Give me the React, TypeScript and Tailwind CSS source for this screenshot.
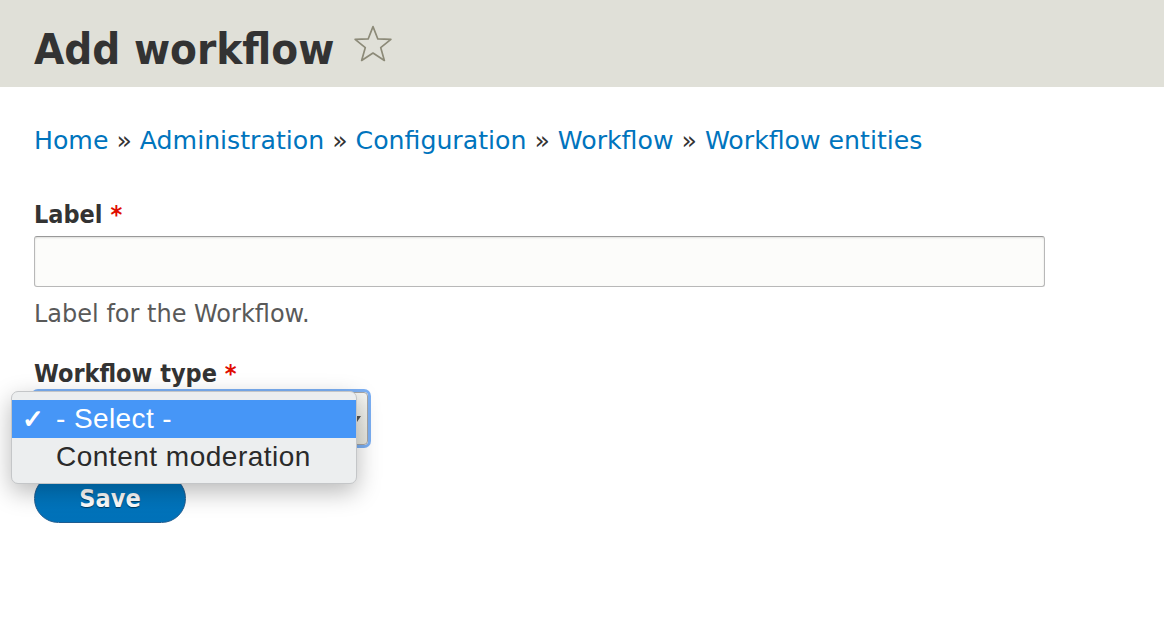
import React from "react";

const bodyFont = { fontFamily: '"DejaVu Sans", Verdana, sans-serif' };
const boldFont = { fontFamily: '"DejaVu Sans Condensed", "DejaVu Sans", Verdana, sans-serif', fontStretch: "condensed" as const };
const menuFont = { fontFamily: '"Liberation Sans", Arial, sans-serif' };

function Star() {
  return (
    <svg width="40" height="40" viewBox="0 0 38 38" className="ml-[19px] mt-[-4px]">
      <path
        d="M19 2.5 L23.6 14.2 L36 14.6 L26.3 22.4 L29.8 34.6 L19 27.6 L8.2 34.6 L11.7 22.4 L2 14.6 L14.4 14.2 Z"
        fill="none"
        stroke="#8c8a78"
        strokeWidth="1.6"
        strokeLinejoin="round"
      />
    </svg>
  );
}

export default function App() {
  const crumbs = ["Home", "Administration", "Configuration", "Workflow", "Workflow entities"];
  return (
    <div className="relative w-[1164px] h-[644px] bg-white overflow-hidden" style={bodyFont}>
      <header className="h-[87px] bg-[#e0e0d8] pl-[34px] pt-[28px] flex items-start">
        <h1 className="text-[43.5px] leading-[43px] font-bold text-[#333333]" style={boldFont}>
          Add workflow
        </h1>
        <Star />
      </header>

      <main className="pl-[34px]">
        <nav className="mt-[41px] h-[25px] text-[25.2px] leading-[25px] text-[#333333] whitespace-nowrap">
          {crumbs.map((c, i) => (
            <span key={c}>
              {i > 0 && <span> » </span>}
              <a className="text-[#0074bd]">{c}</a>
            </span>
          ))}
        </nav>

        <div className="mt-[50px] h-[24px] text-[25px] leading-[24px] font-bold text-[#333333]" style={boldFont}>
          Label <span className="text-[#e00c00] font-bold">*</span>
        </div>
        <div className="mt-[9px] w-[1011px] h-[51px] rounded-[3px] border border-[#b8b8b8] border-t-[#999999] bg-[#fcfcfa] shadow-[inset_0_1px_2px_rgba(0,0,0,0.12)]" />
        <div className="mt-[15px] h-[24px] text-[24px] leading-[24px] text-[#595959]">
          Label for the Workflow.
        </div>

        <div className="mt-[36px] h-[24px] text-[25px] leading-[24px] font-bold text-[#333333]" style={boldFont}>
          Workflow type <span className="text-[#e00c00]">*</span>
        </div>
        <div className="mt-[6px] w-[334px] h-[53px] rounded-[4px] border border-[#a6a6a6] bg-gradient-to-b from-[#f6f6f3] to-[#e7e7df] shadow-[0_0_0_3px_rgba(80,150,240,0.75)] flex items-center justify-end pr-[6px]">
          <svg width="8" height="6" viewBox="0 0 8 6">
            <path d="M0 0 L8 0 L4 6 Z" fill="#555" />
          </svg>
        </div>

        <button
          className="mt-[29px] w-[152px] h-[49px] rounded-full border border-[#1e5c90] bg-gradient-to-b from-[#007bc6] to-[#0071b8] text-white text-[25px] font-bold flex items-center justify-center [text-shadow:0_1px_1px_rgba(0,0,0,0.5)]"
          style={boldFont}
        >
          Save
        </button>
      </main>

      {/* open native select popup */}
      <div
        className="absolute left-[11px] top-[391px] w-[346px] h-[93px] rounded-[7px] bg-[#eceeef] border border-[#c4c6c8] shadow-[0_8px_24px_rgba(0,0,0,0.28)] pt-[8px]"
        style={menuFont}
      >
        <div className="h-[38px] bg-[#4696f7] text-white text-[28px] leading-[38px] flex items-center tracking-[0.4px]">
          <span className="w-[44px] pl-[10px] text-[26px] font-bold">✓</span>
          <span>- Select -</span>
        </div>
        <div className="h-[38px] text-[#2a2a2a] text-[28px] leading-[38px] pl-[44px] tracking-[0.5px]">
          Content moderation
        </div>
      </div>
    </div>
  );
}
